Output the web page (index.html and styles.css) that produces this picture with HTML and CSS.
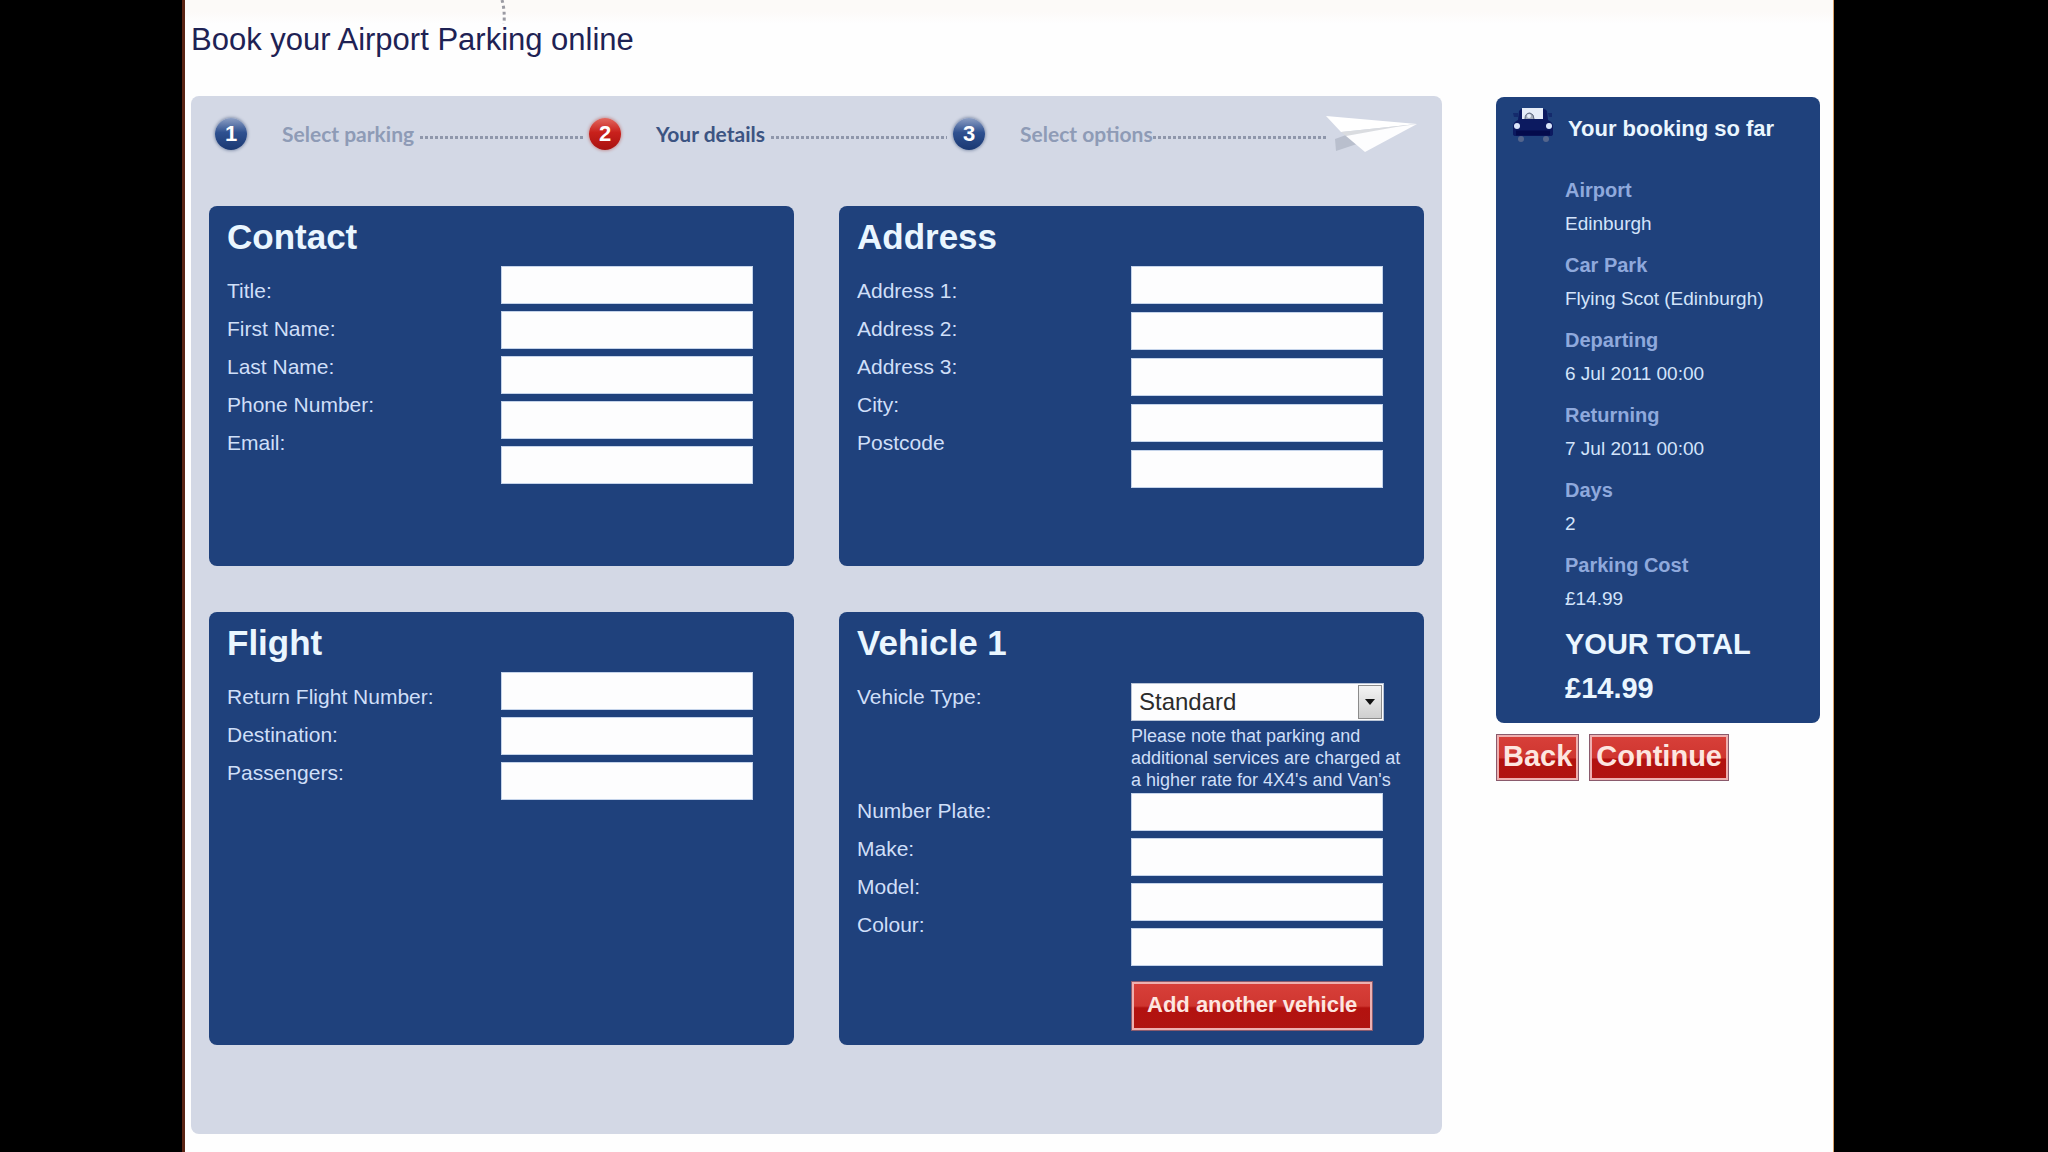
FILE: index.html
```html
<!DOCTYPE html>
<html lang="en">
<head>
<meta charset="utf-8">
<meta name="viewport" content="width=device-width, initial-scale=1">
<title>Book your Airport Parking online</title>
<link rel="stylesheet" href="styles.css">
</head>
<body>
<div class="page">
  <svg class="trail" width="12" height="24" viewBox="0 0 12 24" aria-hidden="true">
    <path d="M3 0 Q6 10 5 24" fill="none" stroke="#9a9aa2" stroke-width="3" stroke-dasharray="3 3"/>
  </svg>
  <h1 class="title">Book your Airport Parking online</h1>

  <form class="booking">
    <main class="panel">
      <div class="progress">
        <ol class="steps">
          <li class="step"><span class="badge">1</span><span class="step-name">Select parking</span><span class="dots"></span></li>
          <li class="step current"><span class="badge">2</span><span class="step-name">Your details</span><span class="dots"></span></li>
          <li class="step"><span class="badge">3</span><span class="step-name">Select options</span><span class="dots"></span></li>
        </ol>
        <svg class="plane" width="92" height="38" viewBox="0 0 92 38" aria-hidden="true">
          <path d="M10 36 L9 24 L20 20 L31 29 Z" fill="#b9bfcd"/>
          <path d="M0 1 L91 9 L15 17 Z" fill="#ffffff"/>
          <path d="M15 17 L91 9 L20 21 Z" fill="#dadce0"/>
          <path d="M20 21 L70 12 L91 9 L39 37 Z" fill="#fdfdfe"/>
        </svg>
      </div>

      <div class="cards">
        <section class="card">
          <h2>Contact</h2>
          <div class="columns">
            <div class="labels">
              <label for="title">Title:</label>
              <label for="first">First Name:</label>
              <label for="last">Last Name:</label>
              <label for="phone">Phone Number:</label>
              <label for="email">Email:</label>
            </div>
            <div class="fields">
              <input id="title" type="text">
              <input id="first" type="text">
              <input id="last" type="text">
              <input id="phone" type="tel">
              <input id="email" type="email">
            </div>
          </div>
        </section>

        <section class="card">
          <h2>Address</h2>
          <div class="columns">
            <div class="labels">
              <label for="address1">Address 1:</label>
              <label for="address2">Address 2:</label>
              <label for="address3">Address 3:</label>
              <label for="city">City:</label>
              <label for="postcode">Postcode</label>
            </div>
            <div class="fields roomy">
              <input id="address1" type="text">
              <input id="address2" type="text">
              <input id="address3" type="text">
              <input id="city" type="text">
              <input id="postcode" type="text">
            </div>
          </div>
        </section>

        <section class="card">
          <h2>Flight</h2>
          <div class="columns">
            <div class="labels">
              <label for="flight">Return Flight Number:</label>
              <label for="destination">Destination:</label>
              <label for="passengers">Passengers:</label>
            </div>
            <div class="fields">
              <input id="flight" type="text">
              <input id="destination" type="text">
              <input id="passengers" type="text">
            </div>
          </div>
        </section>

        <section class="card vehicle">
          <h2>Vehicle 1</h2>
          <div class="columns">
            <div class="labels">
              <label for="type">Vehicle Type:</label>
              <label for="plate">Number Plate:</label>
              <label for="make">Make:</label>
              <label for="model">Model:</label>
              <label for="colour">Colour:</label>
            </div>
            <div class="type-and-fields">
              <div class="select">
                <select id="type"><option>Standard</option><option>4X4</option><option>Van</option></select>
                <span class="arrow"><svg width="10" height="6" viewBox="0 0 10 6" aria-hidden="true"><path d="M0 0 H10 L5 6 Z" fill="#111"/></svg></span>
              </div>
              <p class="note">Please note that parking and additional services are charged at a higher rate for 4X4's and Van's</p>
              <div class="fields">
                <input id="plate" type="text">
                <input id="make" type="text">
                <input id="model" type="text">
                <input id="colour" type="text">
              </div>
              <button class="button add" type="button">Add another vehicle</button>
            </div>
          </div>
        </section>
      </div>
    </main>

    <aside class="side">
      <section class="summary">
        <header class="summary-head">
          <svg width="42" height="36" viewBox="0 0 42 36" aria-hidden="true">
            <ellipse cx="9" cy="32" rx="3" ry="3" fill="#54658c"/>
            <ellipse cx="34" cy="32" rx="3" ry="3" fill="#54658c"/>
            <path d="M7 4 Q8 2 11 2 H31 Q34 2 35 4 L36 13 Q41 15 41 20 V27 Q41 29 38 29 H4 Q1 29 1 27 V20 Q1 15 6 13 Z" fill="#0c1a60"/>
            <path d="M1 6 H6 V10 H2 Z M36 6 H40 V10 H37 Z" fill="#142a6c"/>
            <path d="M10 1 H31 V12 H10 Z" fill="#e6edf8"/>
            <path d="M13 12 Q13 6 18 6 Q22 7 22 12" fill="#a5adba" stroke="#59647c" stroke-width="1"/>
            <circle cx="17" cy="9" r="2" fill="#e6edf8"/>
            <circle cx="5" cy="19" r="3" fill="#dbe6fa"/>
            <circle cx="37" cy="19" r="3" fill="#dbe6fa"/>
            <path d="M4 26 H38" stroke="#040b4c" stroke-width="5"/>
          </svg>
          <h2>Your booking so far</h2>
        </header>
        <dl>
          <div><dt>Airport</dt><dd>Edinburgh</dd></div>
          <div><dt>Car Park</dt><dd>Flying Scot (Edinburgh)</dd></div>
          <div><dt>Departing</dt><dd>6 Jul 2011 00:00</dd></div>
          <div><dt>Returning</dt><dd>7 Jul 2011 00:00</dd></div>
          <div><dt>Days</dt><dd>2</dd></div>
          <div><dt>Parking Cost</dt><dd>£14.99</dd></div>
          <div class="total"><dt>YOUR TOTAL</dt><dd>£14.99</dd></div>
        </dl>
      </section>
      <div class="actions">
        <button class="button" type="button">Back</button>
        <button class="button" type="submit">Continue</button>
      </div>
    </aside>
  </form>
</div>
</body>
</html>
```
FILE: styles.css
```css
* {
  box-sizing: border-box;
}

body {
  margin: 0;
  padding: 0 214px 0 182px;
  background: #000;
  font-family: "Liberation Sans", Arial, sans-serif;
}

h1, h2, p, dl, dd, ol {
  margin: 0;
  padding: 0;
}

.page {
  position: relative;
  min-height: 100vh;
  padding: 22px 13px 18px 6px;
  border-left: 3px solid #5a2414;
  border-right: 1px solid #d9a066;
  background: linear-gradient(#fcfaf8 0, #fcfaf8 12px, #fefefe 24px);
}

.trail {
  position: absolute;
  top: 0;
  left: 314px;
}

.title {
  margin-bottom: 38px;
  color: #1e2254;
  font-size: 31px;
  font-weight: 400;
  line-height: 36px;
}

.booking {
  display: grid;
  grid-template-columns: minmax(0, 1fr) 324px;
  gap: 54px;
  align-items: start;
}

.panel {
  padding: 19px 18px 89px;
  border-radius: 8px;
  background: #d3d8e5;
}

/* Progress bar */
.progress {
  display: flex;
  align-items: center;
  margin-bottom: 53px;
  padding: 0 6px;
}

.steps {
  display: grid;
  flex: 1;
  grid-template-columns: 374fr 364fr 373fr;
  list-style: none;
}

.step {
  display: flex;
  align-items: center;
  color: #8e9bb6;
  font-family: Lato, sans-serif;
  font-size: 21px;
  font-weight: 700;
  line-height: 38px;
}

.badge {
  width: 32px;
  height: 32px;
  margin-right: 35px;
  border-radius: 50%;
  background: linear-gradient(#8d9fc4, #2f5190 45%, #1a3872);
  box-shadow: 0 0 3px 1px #8c98b1;
  color: #fff;
  font-family: "Liberation Sans", Arial, sans-serif;
  font-size: 22px;
  line-height: 32px;
  text-align: center;
}

.current {
  color: #3c5482;
}

.current .badge {
  background: linear-gradient(#e2685f, #c9211c 45%, #a81210);
  box-shadow: 0 0 3px 1px #c59a9e;
}

.dots {
  flex: 1;
  height: 3px;
  margin: 6px 6px 0 6px;
  background: repeating-linear-gradient(90deg, #8f97ab 0, #8f97ab 3px, transparent 3px, transparent 5px);
}

.step:last-child .dots {
  margin-left: 0;
  margin-right: 0;
}

.plane {
  flex: none;
}

/* Form cards */
.cards {
  display: grid;
  grid-template-columns: repeat(2, minmax(0, 1fr));
  gap: 46px 45px;
}

.card {
  min-height: 360px;
  padding: 11px 14px 14px 18px;
  border-radius: 8px;
  background: #1f417c;
  color: #cfdff8;
}

.card h2 {
  margin-bottom: 9px;
  color: #eaf6ff;
  font-size: 35px;
  line-height: 40px;
}

.columns {
  display: grid;
  grid-template-columns: 274px minmax(0, 1fr);
}

.labels {
  display: flex;
  flex-direction: column;
  align-items: flex-start;
  padding-top: 6px;
  font-size: 21px;
  line-height: 38px;
}

.fields {
  display: flex;
  flex-direction: column;
  gap: 7px;
}

.roomy {
  gap: 8px;
}

input {
  width: 100%;
  max-width: 252px;
  height: 38px;
  padding: 0 8px;
  border: 1px solid #c4d3ea;
  background: #fdfdfe;
  font: 21px "Liberation Sans", Arial, sans-serif;
}

.vehicle label:first-child {
  margin-bottom: 76px;
}

.type-and-fields {
  padding-top: 11px;
}

.select {
  position: relative;
  max-width: 253px;
}

select {
  display: block;
  width: 100%;
  height: 38px;
  padding: 0 30px 2px 7px;
  border: 1px solid #b9c4d6;
  border-radius: 0;
  background: #fdfdfe;
  color: #2b2b2b;
  font: 24px "Liberation Sans", Arial, sans-serif;
  appearance: none;
}

.arrow {
  position: absolute;
  top: 2px;
  right: 2px;
  bottom: 2px;
  display: grid;
  width: 24px;
  place-items: center;
  border: 1px solid #8b8b8b;
  background: linear-gradient(#f3f3f3, #cfcfcf);
  pointer-events: none;
}

.note {
  margin: 4px 0 2px;
  font-size: 18px;
  line-height: 22px;
}

.button {
  height: 47px;
  padding: 0 6px 2px;
  border: 1px solid #8a5a6c;
  background: linear-gradient(#d8403a, #cf3630 50%, #b3120f 54%, #b01512);
  box-shadow: inset 0 0 0 2px #eeb0b0;
  color: #fde6e0;
  font: 700 29px "Liberation Sans", Arial, sans-serif;
}

.add {
  height: 50px;
  margin-top: 15px;
  padding: 0 15px 3px;
  font-size: 22px;
}

/* Booking summary */
.side {
  padding-top: 1px;
}

.summary {
  padding: 10px 16px 13px;
  border-radius: 8px;
  background: #1f417c;
}

.summary-head {
  display: flex;
  align-items: flex-end;
  gap: 14px;
  margin-bottom: 31px;
  color: #eaf6ff;
}

.summary-head h2 {
  font-size: 22px;
  line-height: 28px;
}

dl {
  padding-left: 53px;
  color: #d3e4fb;
  font-size: 19px;
  line-height: 33px;
}

dl div {
  margin-bottom: 9px;
}

dt {
  color: #8fa9dc;
  font-size: 20px;
  font-weight: 700;
}

.total,
dl div:nth-last-child(2) {
  margin-bottom: 7px;
}

.total {
  margin-bottom: 0;
  color: #eaf6ff;
  font-size: 29px;
  font-weight: 700;
  line-height: 44px;
}

.total dt {
  color: inherit;
  font-size: inherit;
}

.actions {
  display: flex;
  gap: 10px;
  margin-top: 11px;
}
```
